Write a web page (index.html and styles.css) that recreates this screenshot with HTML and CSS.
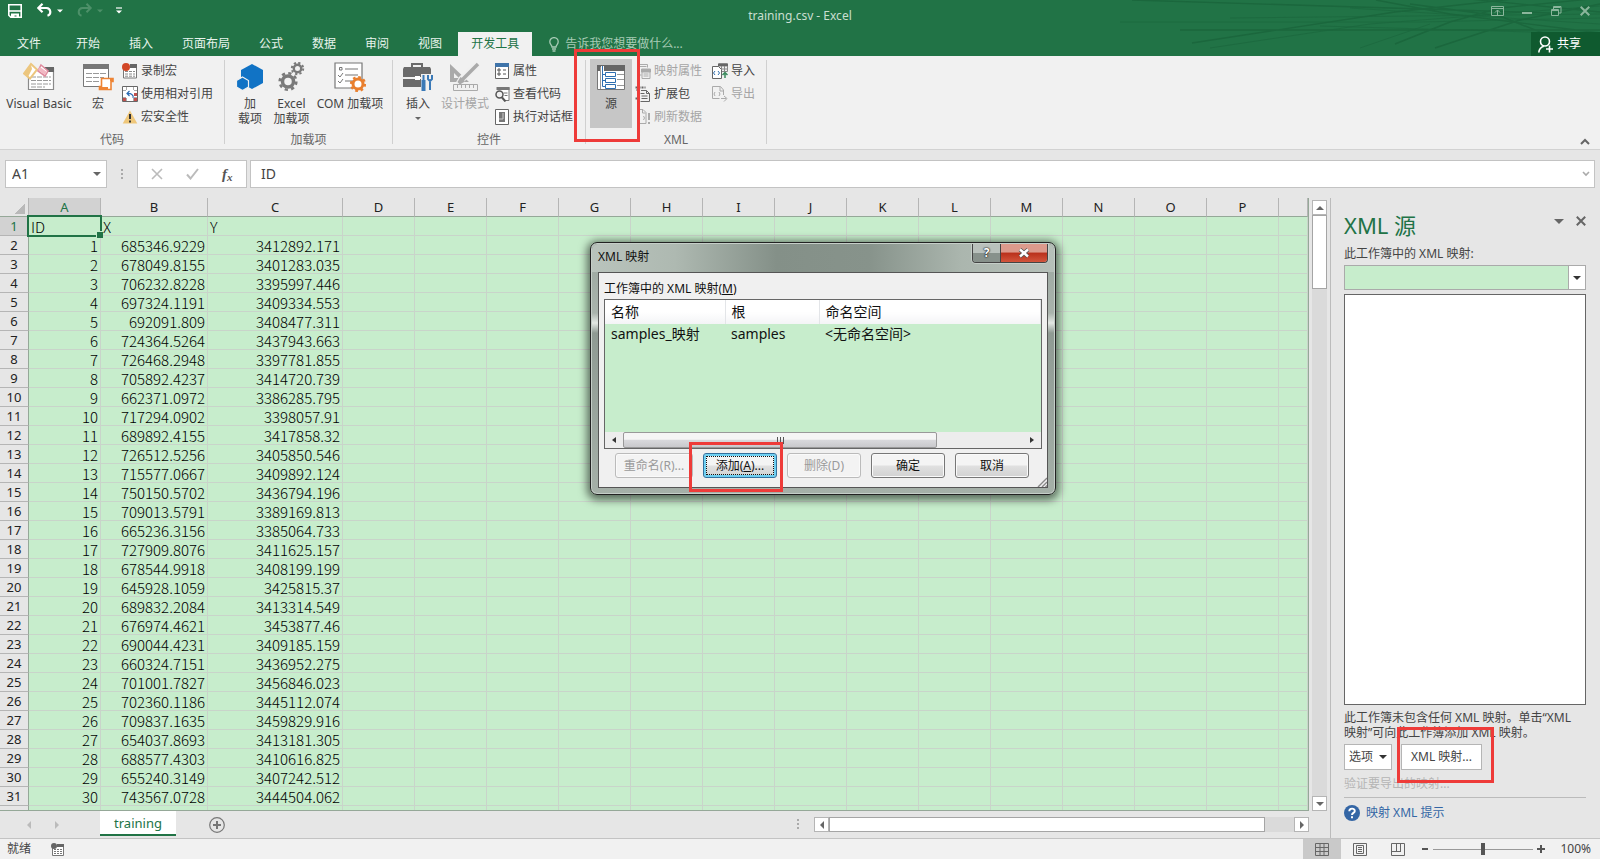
FILE: index.html
```html
<!DOCTYPE html>
<html lang="zh-CN">
<head>
<meta charset="utf-8">
<title>training.csv - Excel</title>
<link rel="stylesheet" href="styles.css">
</head>
<body>
<header class="header">
  <svg class="header-art" width="480" height="56" viewBox="0 0 480 56" fill="none" stroke="#1b673d" stroke-width="1.400">
    <path d="M12 0L430 13M60 30H480M72 43L275 12 420 -4M256 0L330 14 480 33M275 44L330 22 380 8 480 -2M315 48L400 20 480 4M290 4L380 16 450 44M340 -2L480 12"/>
    <path d="M0 22H300L480 18M90 48L250 24 480 6M110 18L480 14M240 48L310 24M200 26L480 34M230 8L480 24" stroke-width="1" opacity=".7"/>
  </svg>
  <div class="titlebar">
    <div class="quick">
      <button aria-label="保存"><svg width="16" height="16" viewBox="0 0 16 16"><path d="M1.800 1.800h12.400v12.400h-10.400l-2-2z" fill="none" stroke="#fff" stroke-width="1.600"/><path d="M2 8h12" stroke="#fff" stroke-width="1.600"/><path d="M4 10.500h8V15H9.500v-2.500h-2V15H4z" fill="#fff"/></svg></button>
      <button class="undo" aria-label="撤消"><svg width="26" height="16" viewBox="0 0 26 16"><path d="M1 5h8.500a4 4 0 0 1 1 7.800M5.500.800L1.300 5l4.200 4.200" fill="none" stroke="#fff" stroke-width="2.200"/><path d="M20 6.500h6l-3 3z" fill="#fff"/></svg></button>
      <button class="redo" aria-label="恢复" disabled><svg width="26" height="16" viewBox="0 0 26 16"><path d="M14 5H5.500a4 4 0 0 0-1 7.800M9.500.800L13.700 5 9.500 9.200" fill="none" stroke="#4d9069" stroke-width="2"/><path d="M20 6.500h6l-3 3z" fill="#4d9069"/></svg></button>
      <button class="custom" aria-label="自定义快速访问工具栏"><svg width="6" height="8" viewBox="0 0 6 8"><path d="M0 1h6" stroke="#fff" stroke-width="1.200"/><path d="M0 3.500h6l-3 3z" fill="#fff"/></svg></button>
    </div>
    <h1 class="title">training.csv - Excel</h1>
    <div class="window-buttons">
      <button aria-label="功能区显示选项"><svg width="14" height="12" viewBox="0 0 14 12" fill="none" stroke="#8bb69c"><path d="M.500 1.500h12v9h-12zM.500 3.500h12M6.500 10V5M4 7.500L6.500 5 9 7.500"/></svg></button>
      <button aria-label="最小化"><svg width="10" height="12" viewBox="0 0 10 12"><path d="M0 8h10" stroke="#8bb69c" stroke-width="2"/></svg></button>
      <button aria-label="还原"><svg width="11" height="12" viewBox="0 0 11 12" fill="none" stroke="#8bb69c"><path d="M.500 4.500h7v6h-7zM.500 5.500h7M2.500 4V1.500h7.500v6.500H8M2.500 2.500h7"/></svg></button>
      <button aria-label="关闭"><svg width="10" height="12" viewBox="0 0 10 12"><path d="M.700 1.700l8.600 8.600M9.300 1.700L.700 10.300" stroke="#8bb69c" stroke-width="2"/></svg></button>
    </div>
  </div>
  <nav class="tabs">
    <button class="tab file">文件</button><button class="tab">开始</button><button class="tab">插入</button><button class="tab">页面布局</button><button class="tab">公式</button><button class="tab">数据</button><button class="tab">审阅</button><button class="tab">视图</button><button class="tab active">开发工具</button>
    <label class="tell"><svg width="10" height="15" viewBox="0 0 10 15" fill="none" stroke="#a7cbb5" stroke-width="1.300"><path d="M3 10C3 8 .800 7.500.800 4.800a4.200 4.200 0 0 1 8.400 0C9.200 7.500 7 8 7 10zM3 12h4M3.500 14h3"/></svg><input type="text" placeholder="告诉我您想要做什么..." aria-label="告诉我您想要做什么"></label>
    <button class="share"><svg width="15" height="17" viewBox="0 0 15 17" fill="none" stroke="#fff" stroke-width="1.600"><circle cx="7" cy="5.500" r="4.500"/><path d="M.800 16.500c.3-3.500 2-5.500 5-6.300M11.500 9.500v7M8 13h7"/></svg>共享</button>
  </nav>
</header>

<section class="ribbon">
  <div class="group code">
    <div class="tools">
      <button class="big vb"><svg width="32" height="28" viewBox="0 0 32 28"><path d="M5.500 9v17.500h25V5" fill="#fff" stroke="#8a8a8a" stroke-width="1.200"/><path d="M21 4h10v5H21z" fill="#666"/><path d="M8 14h20M8 17.500h20M8 21h20M8 24h14" stroke="#999" stroke-dasharray="5 1"/><path d="M8 1l6 5.500-7 9-6-5z" fill="#fff" stroke="#ecc67e" stroke-width="2"/><path d="M1 10l7-8 1 4-4 8z" fill="#ecc67e"/><path d="M18 2l7 6-3 5-7-5z" fill="#fff" stroke="#df8b9e" stroke-width="1.600"/><path d="M15 7l7 5 2-3-7-5z" fill="#f1b8c3"/></svg><span>Visual Basic</span></button>
      <button class="big macro"><svg width="32" height="28" viewBox="0 0 32 28"><path d="M1.500 1.500h25v22h-25z" fill="#fff" stroke="#777"/><path d="M1 1h26v5H1z" fill="#777"/><path d="M4 10.500h20M4 14.500h18M4 18.500h14" stroke="#999" stroke-dasharray="6 1"/><path d="M19.500 15.500H31v3h-2v8H17.500v-3h2z" fill="#fff" stroke="#ee8434" stroke-width="1.600"/><path d="M17 24h9v3h-9zM28 15h3v3h-3z" fill="#ee8434"/></svg><span>宏</span></button>
      <div class="smalls">
        <button class="small"><svg width="16" height="16" viewBox="0 0 16 16"><path d="M1.500 6v9h13V2H9" fill="#fff" stroke="#777"/><path d="M8 1h7v4H8z" fill="#666"/><path d="M3 8.500h10M3 11h10M3 13.200h10" stroke="#888" stroke-dasharray="3 1"/><circle cx="4" cy="4" r="4" fill="#d24726"/></svg>录制宏</button>
        <button class="small"><svg width="16" height="16" viewBox="0 0 16 16"><path d="M.500.500h15v15H.500z" fill="#fff" stroke="#666"/><path d="M4.500 1v14M11.500 1v14M1 4.500h14M1 11.500h14" stroke="#aaa"/><path d="M1 12h3v3H1zM12 12h3v3h-3zM12 7h3v3h-3z" fill="#c0504d"/><path d="M4 4h8v8H4z" fill="#fff"/><path d="M11 12c1-3-2-5-6-4.500M7.500 5L5 7.500 7.500 10" fill="none" stroke="#2b6cb3" stroke-width="1.200"/></svg>使用相对引用</button>
        <button class="small"><svg width="16" height="16" viewBox="0 0 16 16"><path d="M8 1.500L15.300 14.500H.700z" fill="#efc77a"/><path d="M8 5v5M8 11.500v2" stroke="#333" stroke-width="2"/></svg>宏安全性</button>
      </div>
    </div>
    <h2>代码</h2>
  </div>
  <div class="group addins">
    <div class="tools">
      <button class="big a1"><svg width="28" height="28" viewBox="0 0 28 28"><path d="M16 1l11 6v13l-11 6-11-6V7z" fill="#1173c5"/><path d="M6.500 14l6 3.500v6.500l-6 3.500-6-3.500v-6.500z" fill="#1173c5" stroke="#f0f0f0" stroke-width="1.200"/></svg><span>加<br>载项</span></button>
      <button class="big a2"><svg width="28" height="30" viewBox="0 0 28 30" fill="none" stroke="#7a7a7a"><circle cx="10" cy="19.500" r="5.500" stroke-width="3.500"/><circle cx="10" cy="19.500" r="8.300" stroke-width="2.600" stroke-dasharray="3.260 3.260"/><circle cx="19.500" cy="6.500" r="3.700" stroke-width="2.400"/><circle cx="19.500" cy="6.500" r="5.700" stroke-width="2" stroke-dasharray="2.240 2.240"/></svg><span>Excel<br>加载项</span></button>
      <button class="big a3"><svg width="32" height="30" viewBox="0 0 32 30" fill="none"><path d="M1 1h27v25H1z" fill="#fff" stroke="#777" stroke-width="1.200"/><path d="M11 7h13M11 13h13M11 19h8" stroke="#777" stroke-width="1.200"/><path d="M5.500 5.500h2.500v2.500H5.500zM4 13l2 2 3-4M4 19l2 2 3-4" stroke="#777"/><circle cx="24" cy="22" r="5" fill="#fff" stroke="#e97f2e" stroke-width="3"/><circle cx="24" cy="22" r="7" stroke="#e97f2e" stroke-width="2.200" stroke-dasharray="2.750 2.750"/></svg><span>COM 加载项</span></button>
    </div>
    <h2>加载项</h2>
  </div>
  <div class="group controls">
    <div class="tools">
      <button class="big c1"><svg width="32" height="30" viewBox="0 0 32 30"><path d="M10 5V2h10v3" fill="none" stroke="#6b6b6b" stroke-width="2"/><path d="M2 5h26l1 2v8H1V7zM1 17h28v8H1z" fill="#6b6b6b"/><path d="M13 14h5v4h-5z" fill="#fff"/><path d="M19 12h12v17H19z" fill="#f0f0f0"/><path d="M21.500 13v6M20.500 19h2v9h-2zM26 13v4l2 2 2-2v-4M28 18v10" fill="none" stroke="#3a79b7" stroke-width="2"/></svg><span>插入</span><i class="caret"></i></button>
      <button class="big c2" disabled><svg width="32" height="30" viewBox="0 0 32 30"><path d="M1 2l19 18H1zM5 11v5h5z" fill="#aaa" fill-rule="evenodd"/><path d="M28 2L13 17l-3 5" fill="none" stroke="#f0f0f0" stroke-width="7"/><path d="M29 2L14 17M13 16l-3 5 5-3" fill="none" stroke="#aaa" stroke-width="3.500"/><path d="M4.500 22.500h24v6h-24zM8.500 23v3M12.500 23v3M16.500 23v3M20.500 23v3M24.500 23v3" fill="none" stroke="#aaa"/></svg><span>设计模式</span></button>
      <div class="smalls">
        <button class="small"><svg width="14" height="16" viewBox="0 0 14 16"><path d="M.500.500h13v15H.500z" fill="#fff" stroke="#666"/><path d="M0 0h14v4H0z" fill="#3f74aa"/><path d="M3 6h2v2H3zM3 10h2v2H3zM8 7h3M8 11h3" fill="none" stroke="#555"/></svg>属性</button>
        <button class="small"><svg width="15" height="16" viewBox="0 0 15 16"><path d="M2.500 1.500h12v13h-5" fill="#fff" stroke="#777"/><path d="M2 1h13v3H2z" fill="#777"/><path d="M9 7h4M10 9.500h3" stroke="#777"/><circle cx="5" cy="8.500" r="3.500" fill="#f0f0f0" stroke="#555" stroke-width="1.500"/><path d="M7.500 11.500l3.500 4" stroke="#555" stroke-width="2"/></svg>查看代码</button>
        <button class="small"><svg width="14" height="16" viewBox="0 0 14 16"><path d="M.500.500h13v15H.500z" fill="#fff" stroke="#666"/><path d="M4 3h6v10H4z" fill="#777"/><path d="M4 10h4V4" fill="none" stroke="#ccc"/></svg>执行对话框</button>
      </div>
    </div>
    <h2>控件</h2>
  </div>
  <div class="group xml">
    <div class="tools">
      <div class="marked source-wrap"><button class="big source"><svg width="28" height="26" viewBox="0 0 28 26"><path d="M.500.500h27v24H.500z" fill="#fff" stroke="#777"/><path d="M0 0h28v6H0z" fill="#666"/><path d="M20 9.500h7M20 14.500h7M20 20.500h7M3.500 2v22" stroke="#999"/><path d="M5.500 1v20.500M5.500 9.500h3M5.500 15.500h3M5.500 21.500h3" fill="none" stroke="#fff" stroke-width="3"/><path d="M5.500 1v20.500h3M5.500 9.500h3M5.500 15.500h3M8.500 7.500h10v4h-10zM8.500 13.500h10v4h-10zM8.500 19.500h10v4h-10z" fill="none" stroke="#2f6fb0"/></svg><span>源</span></button><i class="mark mark-source"></i></div>
      <div class="smalls">
        <button class="small" disabled><svg width="15" height="16" viewBox="0 0 15 16" fill="none" stroke="#aaa"><path d="M2.500 1v11H6M2 1.500h10v3M2 3.500h9M6.500 6.500h8v9h-8z"/><path d="M6 6h9v3H6z" fill="#aaa"/><path d="M8 11h5M8 13h5"/></svg>映射属性</button>
        <button class="small"><svg width="15" height="16" viewBox="0 0 15 16" fill="none" stroke="#666"><path d="M5.500 4.500h5.500l3 3v8H5M5 7.500h4M6 10h6M6 12.500h6M11 4.500v3h3"/><path d="M0 1.500h10M1 4h3M0 12.500h4" stroke-dasharray="2 1" stroke-width="2"/></svg>扩展包</button>
        <button class="small" disabled><svg width="15" height="16" viewBox="0 0 15 16" fill="none" stroke="#aaa"><path d="M2.500.500h5l3 3v11H2.500zM7 1v3h3M4 7l-1 2 1 2M8 7l1 2-1 2"/><path d="M13.500 4v7M13.500 13v2" stroke-width="2"/></svg>刷新数据</button>
      </div>
      <div class="smalls io">
        <button class="small"><svg width="16" height="16" viewBox="0 0 16 16" fill="none" stroke="#666"><path d="M6.500.500h9v8h-9zM9.500 1v8M12.500 1v8M6 3h10M6 6h10" stroke="#888"/><path d="M6 1h10v2H6z" fill="#666" stroke="none"/><path d="M.500 3.500h6l3 3v9h-9z" fill="#fff"/><path d="M3 8l-1.500 2L3 12M6 8l1.500 2L6 12" stroke="#2f6fb0"/><path d="M13 15v-5M10.500 12L13 9.500l2.500 2.500" stroke="#3a8a5c" stroke-width="1.500"/></svg>导入</button>
        <button class="small" disabled><svg width="16" height="16" viewBox="0 0 16 16" fill="none" stroke="#aaa"><path d="M11.500 9V4l-3-3.500h-8v12h7M8 1v4h3M3 6L2 8l1 2M7 6l1 2-1 2M9 12.500h5M12 10l3 2.500-3 3"/></svg>导出</button>
      </div>
    </div>
    <h2>XML</h2>
  </div>
  <button class="collapse" aria-label="折叠功能区"><svg width="10" height="7" viewBox="0 0 10 7"><path d="M1 6l4-4 4 4" fill="none" stroke="#666" stroke-width="2"/></svg></button>
</section>

<section class="formula-bar">
  <label class="name-box"><input type="text" value="A1" aria-label="名称框"><i class="arrow down wide"></i></label>
  <i class="dots"></i>
  <div class="formula-buttons">
    <button aria-label="取消" disabled><svg width="12" height="12" viewBox="0 0 12 12"><path d="M1 1l10 10M11 1L1 11" stroke="#bbb" stroke-width="1.600"/></svg></button>
    <button aria-label="输入" disabled><svg width="13" height="12" viewBox="0 0 13 12"><path d="M1 6.500l3.500 4L12 1" fill="none" stroke="#bbb" stroke-width="2"/></svg></button>
    <button class="fx" aria-label="插入函数">f<sub>x</sub></button>
  </div>
  <label class="formula"><input type="text" value="ID" aria-label="编辑栏"><svg width="8" height="6" viewBox="0 0 8 6"><path d="M1 1l3 3 3-3" fill="none" stroke="#aaa" stroke-width="1.600"/></svg></label>
</section>

<main class="main">
  <section class="workbook">
    <div class="sheet-area">
      <div class="sheet"><table class="grid"><colgroup id="cols"></colgroup><thead><tr id="letters"></tr></thead><tbody id="rows"></tbody></table></div>
      <div class="vscroll"><button aria-label="向上滚动"><i class="arrow up"></i></button><div class="thumb"></div><span class="track"></span><button aria-label="向下滚动"><i class="arrow down"></i></button></div>
    </div>
    <div class="sheet-tabs">
      <button class="step" aria-label="上一个" disabled><i class="arrow left"></i></button>
      <button class="step" aria-label="下一个" disabled><i class="arrow right"></i></button>
      <button class="sheet-tab">training</button>
      <button class="add" aria-label="新工作表"><svg width="16" height="16" viewBox="0 0 16 16" fill="none" stroke="#777"><circle cx="8" cy="8" r="7.300" stroke-width="1.200"/><path d="M4 8h8M8 4v8" stroke-width="2"/></svg></button>
      <i class="dots"></i>
      <div class="hscroll"><button aria-label="向左滚动"><i class="arrow left"></i></button><div class="thumb"></div><span class="track"></span><button aria-label="向右滚动"><i class="arrow right"></i></button></div>
    </div>
  </section>
  <aside class="panel">
    <div class="panel-head"><h2>XML 源</h2><button aria-label="任务窗格选项"><i class="arrow down big-arrow"></i></button><button aria-label="关闭窗格"><svg width="10" height="10" viewBox="0 0 10 10"><path d="M.800.800l8.400 8.400M9.200.800L.800 9.200" stroke="#666" stroke-width="2"/></svg></button></div>
    <label class="map-label" for="maps">此工作簿中的 XML 映射:</label>
    <div class="combo"><select id="maps"><option></option></select><i class="arrow down dark"></i></div>
    <div class="tree"></div>
    <p class="note">此工作簿未包含任何 XML 映射。单击“XML 映射”可向此工作簿添加 XML 映射。</p>
    <div class="panel-buttons"><button class="plain">选项<i class="arrow down wide dark"></i></button><div class="marked"><button class="plain maps">XML 映射...</button><i class="mark mark-maps"></i></div></div>
    <p class="verify">验证要导出的映射...</p>
    <a class="help" href="#tips"><svg width="16" height="16" viewBox="0 0 16 16"><circle cx="8" cy="8" r="8" fill="#3466a5"/><path d="M5.300 6.200c0-3.400 5.500-3.400 5.500-.3C10.800 8 8 7.800 8 10" fill="none" stroke="#fff" stroke-width="1.900"/><path d="M7 11.300h2v2H7z" fill="#fff"/></svg>映射 XML 提示</a>
  </aside>
</main>

<footer class="status">
  <span>就绪</span>
  <button class="rec" aria-label="录制宏"><svg width="13" height="13" viewBox="0 0 13 13"><path d="M1.500 5v7.500h11V1.500H7" fill="#fff" stroke="#777"/><path d="M6 1h7v3H6z" fill="#666"/><path d="M3 6.500h9M3 8.500h9M3 10.500h9" stroke="#777" stroke-dasharray="2 1"/><circle cx="3" cy="3" r="3" fill="#666"/></svg></button>
  <div class="views">
    <button class="on" aria-label="普通"><svg width="14" height="13" viewBox="0 0 14 13" fill="none" stroke="#666"><path d="M.500.500h13v12H.500zM5 0v13M9 0v13M0 4.500h14M0 8.500h14"/></svg></button>
    <button aria-label="页面布局"><svg width="14" height="13" viewBox="0 0 14 13" fill="none" stroke="#666"><path d="M.500.500h13v12H.500zM3.500 2.500h7v8h-7zM5 4.500h4M5 6.500h4M5 8.500h4"/></svg></button>
    <button aria-label="分页预览"><svg width="14" height="13" viewBox="0 0 14 13" fill="none" stroke="#666"><path d="M.500.500h13v12H.500zM5.500 1v7M9.500 1v7M0 8.500h10"/></svg></button>
  </div>
  <button class="zoom-step" aria-label="缩小"><svg width="8" height="8" viewBox="0 0 8 8"><path d="M1 4h6" stroke="#555" stroke-width="2"/></svg></button>
  <input class="zoom" type="range" min="0" max="200" value="100" aria-label="缩放">
  <button class="zoom-step" aria-label="放大"><svg width="8" height="8" viewBox="0 0 8 8"><path d="M0 4h8M4 0v8" stroke="#555" stroke-width="2"/></svg></button>
  <span class="percent">100%</span>
</footer>

<div class="dialog" role="dialog" aria-label="XML 映射">
  <div class="dialog-title"><span>XML 映射</span><div class="caption"><button class="q" aria-label="帮助">?</button><button class="x" aria-label="关闭"><svg width="12" height="10" viewBox="0 0 12 10"><path d="M2 1.500l8 7M10 1.500l-8 7" stroke="#555" stroke-width="4"/><path d="M2 1.500l8 7M10 1.500l-8 7" stroke="#fff" stroke-width="2.400"/></svg></button></div></div>
  <div class="client">
    <p class="list-label">工作簿中的 XML 映射(<u>M</u>)</p>
    <div class="list">
      <table class="maps-table"><colgroup><col class="w1"><col class="w2"><col></colgroup><thead><tr><th>名称</th><th>根</th><th>命名空间</th></tr></thead><tbody><tr><td>samples_映射</td><td>samples</td><td>&lt;无命名空间&gt;</td></tr></tbody></table>
      <div class="list-scroll"><button aria-label="向左滚动"><i class="arrow left dark"></i></button><div class="list-thumb"><i></i><i></i><i></i></div><span class="track"></span><button aria-label="向右滚动"><i class="arrow right dark"></i></button></div>
    </div>
    <div class="actions">
      <button class="rename" disabled>重命名(R)...</button>
      <div class="marked"><button class="focus"><span>添加(<u>A</u>)...</span></button><i class="mark mark-add"></i></div>
      <button disabled>删除(D)</button>
      <button>确定</button>
      <button>取消</button>
    </div>
    <svg class="grip" width="10" height="10" viewBox="0 0 10 10"><path d="M1 10l9-9M5 10l5-5M8.500 10L10 8.500" stroke="#888" stroke-width="1.400"/></svg>
  </div>
</div>
<script src="app.js"></script>
</body>
</html>
```
FILE: styles.css
```css
* { box-sizing: border-box; }
body {
  margin: 0;
  height: 100vh;
  display: flex;
  flex-direction: column;
  position: relative;
  overflow: hidden;
  background: #e6e6e6;
  color: #444;
  font: 12px/16px "Noto Sans", "Noto Sans CJK SC", sans-serif;
}
button, input, select { font: inherit; color: inherit; border: 0; padding: 0; margin: 0; background: none; }
input { min-width: 0; outline: 0; }
h1, h2, p { margin: 0; font-size: 12px; font-weight: 400; }
svg { display: block; flex: none; }
i { font-style: normal; }

/* Shared glyphs */
.caret { display: block; width: 0; height: 0; border: 3px solid transparent; border-top-color: #666; border-bottom: 0; }
.arrow { display: block; width: 0; height: 0; border: 4px solid transparent; color: #666; }
.arrow.up { border-bottom-color: currentColor; border-top: 0; }
.arrow.down { border-top-color: currentColor; border-bottom: 0; }
.arrow.left { border-right-color: currentColor; border-left: 0; }
.arrow.right { border-left-color: currentColor; border-right: 0; }
.arrow.wide { border-width: 4px 4px 0; }
.arrow.big-arrow { border-width: 5px 5px 0; }
.arrow.dark { color: #333; }
.dots { width: 2px; height: 11px; background: repeating-linear-gradient(#aaa 0 2px, transparent 2px 4px); }
.marked { position: relative; display: flex; }
.mark { position: absolute; z-index: 3; border: 3px solid #ee3b39; pointer-events: none; }

/* Header */
.header { position: relative; background: #217346; color: #fff; }
.header-art { position: absolute; right: 0; top: 0; }
.titlebar { position: relative; height: 32px; display: grid; grid-template-columns: 1fr auto 1fr; }
.quick { display: flex; align-items: flex-start; padding: 3px 0 0 7px; }
.undo { margin-left: 14px; }
.redo { margin-left: 14px; }
.custom { margin: 4px 0 0 13px; }
.title { line-height: 32px; color: #c9dfd1; }
.window-buttons { display: flex; justify-content: flex-end; align-items: flex-start; gap: 17px; padding: 5px 8px 0 0; }
.window-buttons button { min-width: 12px; }
.tabs { position: relative; display: flex; gap: 3px; height: 24px; }
.tab { padding: 0 13px; color: #e8f3ec; }
.tab.file { padding: 0 19px 0 17px; }
.tab.active { background: #f1f1f1; color: #217346; }
.tell { display: flex; align-items: center; gap: 6px; padding-left: 14px; flex: 1; }
.tell input { width: 200px; }
.tell input::placeholder { color: #a7cbb5; opacity: 1; }
.share { display: flex; align-items: center; gap: 4px; width: 69px; padding-left: 7px; background: #0f5a2f; }

/* Ribbon */
.ribbon { display: flex; height: 94px; background: #f1f1f1; border-bottom: 1px solid #d2d2d2; position: relative; }
.group { display: flex; flex-direction: column; margin: 4px 0 5px; border-right: 1px solid #d0d0d0; }
.group h2 { text-align: center; color: #666; line-height: 8px; }
.tools { display: flex; flex: 1; align-items: flex-start; }
.big { display: flex; flex-direction: column; align-items: center; padding-top: 2px; line-height: 15px; }
.big svg { height: 30px; margin-bottom: 4px; }
.big .caret { margin-top: 6px; }
button:disabled { color: #a5a5a5; }
.smalls { display: flex; flex-direction: column; gap: 7px; padding-top: 3px; }
.small { display: flex; align-items: center; gap: 3px; height: 16px; white-space: nowrap; }
.code { width: 225px; }
.vb { width: 78px; }
.macro { width: 40px; }
.code .smalls { padding-left: 4px; }
.small svg { width: 16px; }
.addins { width: 168px; }
.addins .tools { padding-left: 7px; }
.a1 { width: 36px; }
.a2 { width: 47px; }
.a3 { width: 70px; white-space: nowrap; }
.controls { width: 193px; }
.controls .tools { padding-left: 6px; }
.c1 { width: 38px; }
.c2 { width: 56px; }
.controls .smalls { padding-left: 1px; }
.xml { width: 181px; }
.xml .tools { padding-left: 4px; }
.source-wrap { height: 69px; margin-top: -1px; }
.source { width: 42px; padding-top: 6px; background: #c6c6c6; }
.source svg { height: 26px; margin-bottom: 5px; }
.mark-source { inset: -10px -8px -14px -16px; }
.xml .smalls { padding-left: 3px; }
.xml .smalls.io { padding-left: 10px; }
.collapse { margin: auto 10px 4px auto; }

/* Formula bar */
.formula-bar { display: flex; align-items: center; padding: 10px 5px; height: 48px; font-size: 14px; }
.formula-bar > div, .formula-bar > label { height: 28px; background: #fff; border: 1px solid #c3c3c3; display: flex; align-items: center; }
.name-box { width: 102px; padding: 0 5px 0 6px; }
.name-box input { flex: 1; }
.formula-bar .dots { margin: 0 14px; }
.formula-buttons { width: 110px; justify-content: space-around; padding: 0 2px; }
.fx { font: italic 700 15px/20px "Liberation Serif", serif; color: #555; }
.fx sub { font-size: 11px; line-height: 8px; vertical-align: -2px; }
.formula { flex: 1; margin-left: 3px; padding: 0 4px 0 10px; }
.formula input { flex: 1; }

/* Worksheet */
.main { flex: 1; display: flex; min-height: 0; }
.workbook { flex: 1; min-width: 0; display: flex; flex-direction: column; border-right: 1px solid #bbb; }
.sheet-area { flex: 1; min-height: 0; display: flex; }
.sheet { flex: 1; min-width: 0; overflow: hidden; border-right: 1px solid #95a898; border-bottom: 1px solid #95a898; }
.grid { width: 100%; table-layout: fixed; border-collapse: separate; border-spacing: 0; font: 300 15px/16px "Noto Sans CJK SC", sans-serif; color: #000; }
.grid th { font: 400 13px/18px "Noto Sans", sans-serif; color: #222; background: #e6e6e6; padding: 0; height: 19px; }
.grid thead th { border-right: 1px solid #b5b5b5; border-bottom: 1px solid #95a898; border-top: 0; }
.grid tbody th { border-right: 1px solid #95a898; border-bottom: 1px solid #b5b5b5; }
.grid .current { background: #d2d2d2; color: #217346; }
.grid td { height: 19px; padding: 2px 2px 0; background: #c7edcc; border-right: 1px solid #c9d4ca; border-bottom: 1px solid #c9d4ca; white-space: nowrap; }
.grid td.number { text-align: right; }
.grid .corner { background: linear-gradient(135deg, transparent 50%, #b9b9b9 50%) 14px 5px / 11px 11px no-repeat #e6e6e6; }
.grid td.selected { position: relative; }
.selected::before { content: ""; position: absolute; inset: -2px -2px -2px -2px; border: 2px solid #217346; }
.selected::after { content: ""; position: absolute; right: -3px; bottom: -3px; width: 6px; height: 6px; background: #217346; border: 1px solid #c7edcc; border-width: 1px 0 0 1px; }
.c-head { width: 29px; }
.c-a { width: 72px; }
.c-b { width: 107px; }
.c-c { width: 135px; }
.c-n { width: 72px; }
.vscroll { display: flex; flex-direction: column; width: 15px; margin: 2px 3px 0; }
.vscroll button, .hscroll button { width: 15px; height: 15px; display: grid; place-items: center; background: #fff; border: 1px solid #b5b5b5; flex: none; }
.thumb { background: #fff; border: 1px solid #a5a5a5; }
.vscroll .thumb { height: 74px; }
.track { flex: 1; background: #dadada; }
.sheet-tabs { display: flex; height: 27px; align-items: center; padding-right: 21px; }
.step { width: 28px; display: grid; place-items: center; }
.step:first-child { margin-left: 15px; }
.step .arrow { color: #bbb; }
.sheet-tab { margin-left: 29px; width: 76px; height: 25px; align-self: flex-start; background: #fff; color: #217346; border-bottom: 2px solid #217346; font-size: 13px; }
.add { margin-left: 33px; }
.sheet-tabs .dots { margin: 0 15px 0 auto; }
.hscroll { display: flex; width: 495px; height: 15px; }
.hscroll .thumb { width: 436px; }

/* Task pane */
.panel { width: 269px; padding: 12px 14px 17px 13px; display: flex; flex-direction: column; }
.panel-head { display: flex; align-items: flex-start; gap: 12px; }
.panel-head h2 { flex: 1; font-size: 22px; line-height: 30px; color: #217346; }
.panel-head button { margin-top: 6px; height: 10px; display: grid; place-items: center; }
.map-label { margin-top: 4px; line-height: 20px; }
.combo { margin-top: 1px; height: 25px; border: 1px solid #aaa; background: #c7edcc; position: relative; display: flex; align-items: center; justify-content: flex-end; }
.combo select { appearance: none; position: absolute; inset: 0; width: 100%; }
.combo::before { content: ""; width: 16px; height: 23px; background: #fff; border-left: 1px solid #aaa; }
.combo .arrow { position: absolute; right: 4px; border-width: 4px 4px 0; }
.tree { flex: 1; margin: 4px 0 5px; background: #fff; border: 1px solid #666; }
.note { line-height: 15px; width: 242px; }
.panel-buttons { display: flex; gap: 9px; margin-top: 4px; }
.plain { height: 26px; padding: 0 4px; display: flex; align-items: center; gap: 6px; background: #fff; border: 1px solid #b5b5b5; color: #444; }
.plain.maps { padding: 0 9px; }
.mark-maps { inset: -17px -12px -13px -4px; }
.verify { color: #b5b5b5; padding: 6px 0 5px; border-bottom: 1px solid #bbb; }
.help { display: flex; align-items: center; gap: 6px; margin-top: 7px; color: #3466a5; text-decoration: none; }

/* Status bar */
.status { display: flex; align-items: center; height: 21px; padding: 0 9px 0 7px; background: #f1f1f1; border-top: 1px solid #c3c3c3; }
.rec { margin-left: 20px; }
.views { display: flex; margin-left: auto; align-self: stretch; margin-right: 4px; }
.views button { width: 38px; display: grid; place-items: center; }
.views .on { background: #c9c9c9; }
.zoom { appearance: none; width: 100px; margin: 0 4px; height: 12px; background: linear-gradient(#999, #999) center / 100% 1px no-repeat; }
.zoom::-webkit-slider-thumb { appearance: none; width: 4px; height: 12px; background: #555; }
.percent { margin-left: 15px; }

/* Dialog window */
.dialog { position: absolute; left: 590px; top: 242px; width: 466px; padding: 0 7px 6px; border: 1px solid #222; border-radius: 7px; background: linear-gradient(#9aa69e 0, #a9b3ac 70px, #e3e8e4 80px, #8f9a93 90px, #a5b0a8 100%); box-shadow: inset 0 0 0 1px #c5cec8, 0 2px 9px 3px rgb(0 0 0 / 55%); color: #111; }
.dialog-title { margin: 1px -6px 0; padding: 0 6px; display: flex; justify-content: space-between; height: 28px; line-height: 26px; border-radius: 6px 6px 0 0; background: linear-gradient(90deg, #b9c3bc, #aeb9b1 18%, #849088 40%, #87938b 60%, #abb6ae 80%, #b6c0b9); }
.caption { display: flex; height: 19px; border: 1px solid #444; border-top: 0; border-radius: 0 0 4px 4px; overflow: hidden; box-shadow: 0 0 0 1px #c5cec8; }
.q { width: 28px; color: #fff; font-weight: 700; line-height: 16px; text-shadow: 0 0 2px #222, 0 0 1px #222, 0 0 1px #222; background: linear-gradient(#b9c1bc 50%, #87918b 50%); border-right: 1px solid #444; }
.x { width: 46px; display: grid; place-items: center; background: linear-gradient(#dc9a8c 0 45%, #b9301b 50%, #d2553c); }
.client { position: relative; background: #f0f0f0; border: 1px solid #555; padding: 6px 5px 9px 5px; }
.list-label { line-height: 20px; }
.list { border: 1px solid #666; height: 150px; background: #c7edcc; display: flex; flex-direction: column; justify-content: space-between; }
.maps-table { width: 100%; table-layout: fixed; border-collapse: collapse; font-size: 14px; line-height: 20px; }
.maps-table th { height: 24px; padding: 0 6px; text-align: left; font-weight: 400; background: linear-gradient(#fff 50%, #f3f4f6); border-right: 1px solid #e3e5e8; }
.maps-table td { padding: 0 6px; white-space: nowrap; }
.w1 { width: 120px; }
.w2 { width: 94px; }
.list-scroll { display: flex; height: 16px; background: #ededed; }
.list-scroll button { width: 18px; display: grid; place-items: center; }
.list-scroll .arrow { border-width: 3px 4px; }
.list-scroll .left { border-left: 0; }
.list-scroll .right { border-right: 0; }
.list-scroll .track { background: none; }
.list-thumb { width: 314px; display: flex; gap: 2px; justify-content: center; align-items: center; border: 1px solid #999; border-radius: 2px; background: linear-gradient(#f5f5f5 45%, #d9d9dc 50%, #c9c9cc); }
.list-thumb i { width: 1px; height: 7px; background: #555; }
.actions { display: flex; gap: 10px; margin-top: 4px; padding-left: 11px; }
.actions button { width: 74px; height: 25px; white-space: nowrap; border: 1px solid #777; border-radius: 3px; background: linear-gradient(#f4f4f4 48%, #e0e0e0 52%, #d2d2d2); box-shadow: inset 0 0 0 1px #fafafa; color: #111; }
.actions .rename { width: 78px; }
.actions button:disabled { color: #9a9a9a; border-color: #bbb; background: #f3f3f3; }
.actions .focus { border-color: #34719e; box-shadow: inset 0 0 0 2px #6fd0f2; padding: 2px; }
.focus span { display: block; border: 1px dotted #111; line-height: 17px; }
.mark-add { inset: -11px -6px -14px -14px; }
.grip { position: absolute; right: 0; bottom: 0; }
```
FILE: app.js
```js
const points = `685346.9229 3412892.171
678049.8155 3401283.035
706232.8228 3395997.446
697324.1191 3409334.553
692091.809 3408477.311
724364.5264 3437943.663
726468.2948 3397781.855
705892.4237 3414720.739
662371.0972 3386285.795
717294.0902 3398057.91
689892.4155 3417858.32
726512.5256 3405850.546
715577.0667 3409892.124
750150.5702 3436794.196
709013.5791 3389169.813
665236.3156 3385064.733
727909.8076 3411625.157
678544.9918 3408199.199
645928.1059 3425815.37
689832.2084 3413314.549
676974.4621 3453877.46
690044.4231 3409185.159
660324.7151 3436952.275
701001.7827 3456846.023
702360.1186 3445112.074
709837.1635 3459829.916
654037.8693 3413181.305
688577.4303 3410616.825
655240.3149 3407242.512
743567.0728 3444504.062`.split("\n").map((line, i) => [i + 1, ...line.split(" ")]);

const letters = [..."ABCDEFGHIJKLMNOP", ""];
const widths = ["c-head", "c-a", "c-b", "c-c", ...Array(13).fill("c-n"), ""];
document.getElementById("cols").innerHTML = widths.map(c => `<col class="${c}">`).join("");
document.getElementById("letters").innerHTML = '<th class="corner"></th>' +
  letters.map((l, i) => `<th scope="col"${i === 0 ? ' class="current"' : ""}>${l}</th>`).join("");

const rows = [["ID", "X", "Y"], ...points, []];
document.getElementById("rows").innerHTML = rows.map((row, r) => {
  const cells = letters.map((_, c) => {
    const cls = r === 0 && c === 0 ? "selected" : r > 0 && row[c] ? "number" : "";
    return `<td class="${cls}">${row[c] ?? ""}</td>`;
  }).join("");
  return `<tr><th scope="row"${r === 0 ? ' class="current"' : ""}>${row.length ? r + 1 : ""}</th>${cells}</tr>`;
}).join("");
```
